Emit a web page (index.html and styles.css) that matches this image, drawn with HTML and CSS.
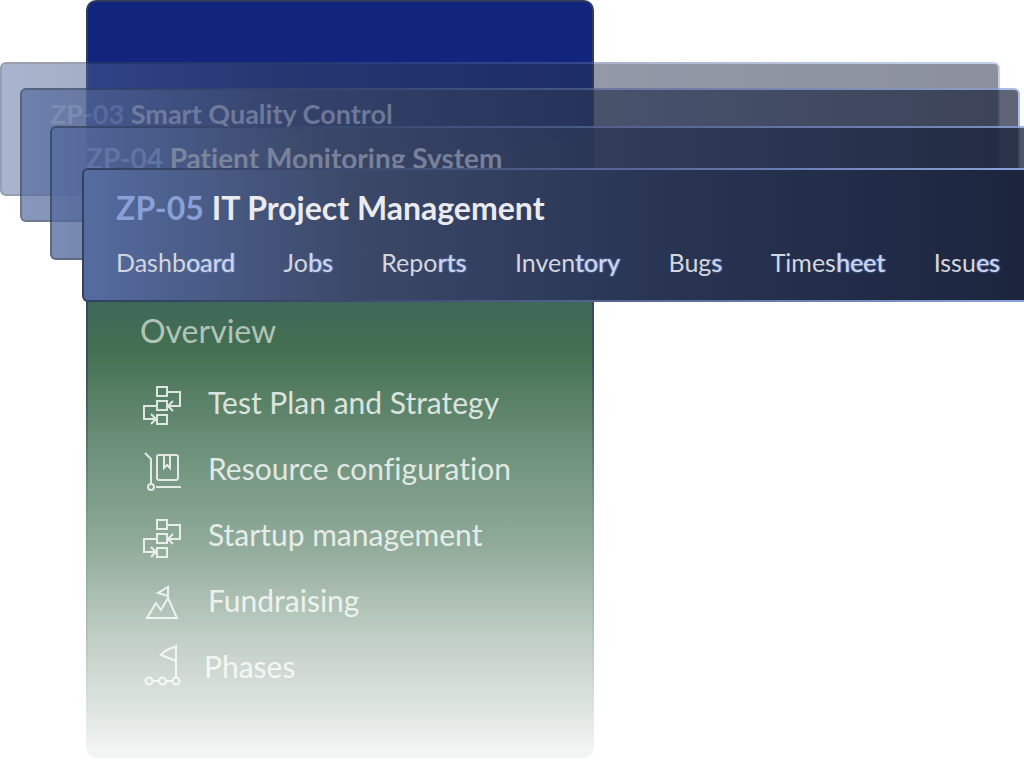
FILE: index.html
```html
<!DOCTYPE html>
<html lang="en">
<head>
    <meta charset="UTF-8">
    <meta name="viewport" content="width=device-width, initial-scale=1.0">
    <title>Projects</title>
    <link rel="stylesheet" href="styles.css">
</head>
<body>

    <main class="stage">
        <aside class="panel">
            <h2>Overview</h2>
            <ul class="modules">
                <li>
                    <svg class="icon" viewBox="-2 1 42 40"><path d="M15 2h10v9H15zM15 16h10v9H15zM15 30h10v9H15zM25 7h13v14H26M31 16l-5 5 5 5M15 21H2v13h12M9 29l5 5-5 5"/></svg>
                    <a href="#">Test Plan and Strategy</a>
                </li>
                <li>
                    <svg class="icon" viewBox="-1 1 42 40"><path d="M4 2l6 6v24M18 4h17q2 0 2 2v21q0 2-2 2H18q-2 0-2-2V6q0-2 2-2zM23 5v12l3-3 3 3V5M15 36h25"/><circle cx="10" cy="36" r="3"/></svg>
                    <a href="#">Resource configuration</a>
                </li>
                <li>
                    <svg class="icon" viewBox="-2 0 42 40"><path d="M15 2h10v9H15zM15 16h10v9H15zM15 30h10v9H15zM25 7h13v14H26M31 16l-5 5 5 5M15 21H2v13h12M9 29l5 5-5 5"/></svg>
                    <a href="#">Startup management</a>
                </li>
                <li>
                    <svg class="icon" viewBox="-1 0 42 40"><path d="M27 14L36 34H6l9-15 5 7 7-12V3L17 9l10 3"/></svg>
                    <a href="#">Fundraising</a>
                </li>
                <li class="last">
                    <svg class="icon" viewBox="-2 3 42 40"><path d="M34 31V-2M33 0Q24 2 19 8l15 6M11 34h6M24 34h7"/><circle cx="7" cy="34" r="3.5"/><circle cx="20.5" cy="34" r="3.5"/><circle cx="34" cy="34" r="3.5"/></svg>
                    <a href="#">Phases</a>
                </li>
            </ul>
        </aside>

        <section class="card card-2"></section>
        <section class="card card-3">
            <h3><span class="code">ZP-03</span> Smart Quality Control</h3>
        </section>
        <section class="card card-4">
            <h3><span class="code">ZP-04</span> Patient Monitoring System</h3>
        </section>
        <section class="card card-5">
            <h1><span class="code">ZP-05</span> IT Project Management</h1>
            <nav>
                <a href="#">Dashb<span class="glow">oard</span></a>
                <a href="#">Jo<span class="glow">bs</span></a>
                <a href="#">Repo<span class="glow">rts</span></a>
                <a href="#">Inven<span class="glow">tory</span></a>
                <a href="#">Bug<span class="glow">s</span></a>
                <a href="#">Times<span class="glow">heet</span></a>
                <a href="#">Issu<span class="glow">es</span></a>
            </nav>
        </section>
    </main>

</body>
</html>
```

FILE: styles.css
```css
body {
    margin: 0;
    background: #fff;
    font-family: Lato, "Liberation Sans", sans-serif;
    font-variant-ligatures: none;
}

a {
    color: inherit;
    text-decoration: none;
}

/* Panel and cards share one grid cell and overlap through their margins */
.stage {
    display: grid;
    grid-template-columns: minmax(0, 1fr);
    align-items: start;
    overflow: hidden;
}

.stage > * {
    grid-area: 1 / 1;
    box-sizing: border-box;
}

.panel {
    width: 508px;
    margin-left: 86px;
    padding: 308px 52px 68px;
    border: 2px solid transparent;
    border-bottom: 0;
    border-radius: 10px;
    background:
        linear-gradient(#12257d 0, #12257d 120px, #3c6660 280px, #3f6958 310px, #436f50 345px, #6a8f78 440px, #8faa99 540px, #c3d0c7 640px, #dde4df 705px, #f3f5f5 750px) padding-box,
        linear-gradient(#2f3b58 0, #3b4d60 360px, #4f7068 430px, #7f9d93 520px, #b5c7bd 640px, #f3f5f5 750px) border-box;
    color: #fff;
}

.panel h2 {
    margin: 0 0 34px;
    font-size: 32px;
    font-weight: 400;
    line-height: 42px;
    color: rgba(255, 255, 255, 0.6);
}

.modules {
    display: flex;
    flex-direction: column;
    gap: 26px;
    margin: 0;
    padding: 0;
    list-style: none;
    color: rgba(255, 255, 255, 0.8);
}

.modules li {
    display: flex;
    gap: 26px;
    height: 40px;
    font-size: 30px;
    line-height: 32px;
}

.modules .last {
    gap: 22px;
}

.icon {
    width: 42px;
    height: 40px;
    overflow: visible;
    fill: none;
    stroke: currentColor;
    stroke-width: 2;
}

.card {
    height: 134px;
    border: 2px solid transparent;
    border-radius: 6px;
    background:
        linear-gradient(90deg, #556ca0 0, #3b4868 28%, #2b3756 55%, #232e4b 75%, #1c243c 100%) padding-box,
        linear-gradient(90deg, #34405f 0, #3c4a70 28%, #5a6b9c 60%, #8aa0d8 95%) border-box;
    color: #ebebef;
}

.card h1,
.card h3 {
    margin: 0;
    font-weight: 700;
    white-space: nowrap;
}

.card h1 {
    font-size: 32px;
    line-height: 40px;
}

.card h3 {
    font-size: 28px;
    line-height: 32px;
    color: #8d94a8;
}

.code {
    color: #8aa0d8;
}

.card h3 .code {
    color: #6a7cac;
}

.card-2 {
    margin: 62px 24px 0 0;
    opacity: 0.5;
}

.card-3 {
    margin: 88px 4px 0 20px;
    padding: 8px 28px;
    opacity: 0.7;
}

.card.card-3 h3 {
    font-size: 27px;
}

.card-4 {
    margin: 126px -26px 0 50px;
    padding: 14px 34px;
    opacity: 0.78;
}

.card-5 {
    z-index: 1;
    margin: 168px -28px 0 82px;
    padding: 18px 50px 18px 32px;
}

.card nav {
    display: flex;
    justify-content: space-between;
    margin-top: 18px;
    font-size: 25px;
    line-height: 32px;
    color: #d3d6df;
}

/* Blue halo on the tail of every tab label */
.glow {
    text-shadow: 0 0 2px #6f8fe0, 1px 0 1px #6f8fe0;
}
```
